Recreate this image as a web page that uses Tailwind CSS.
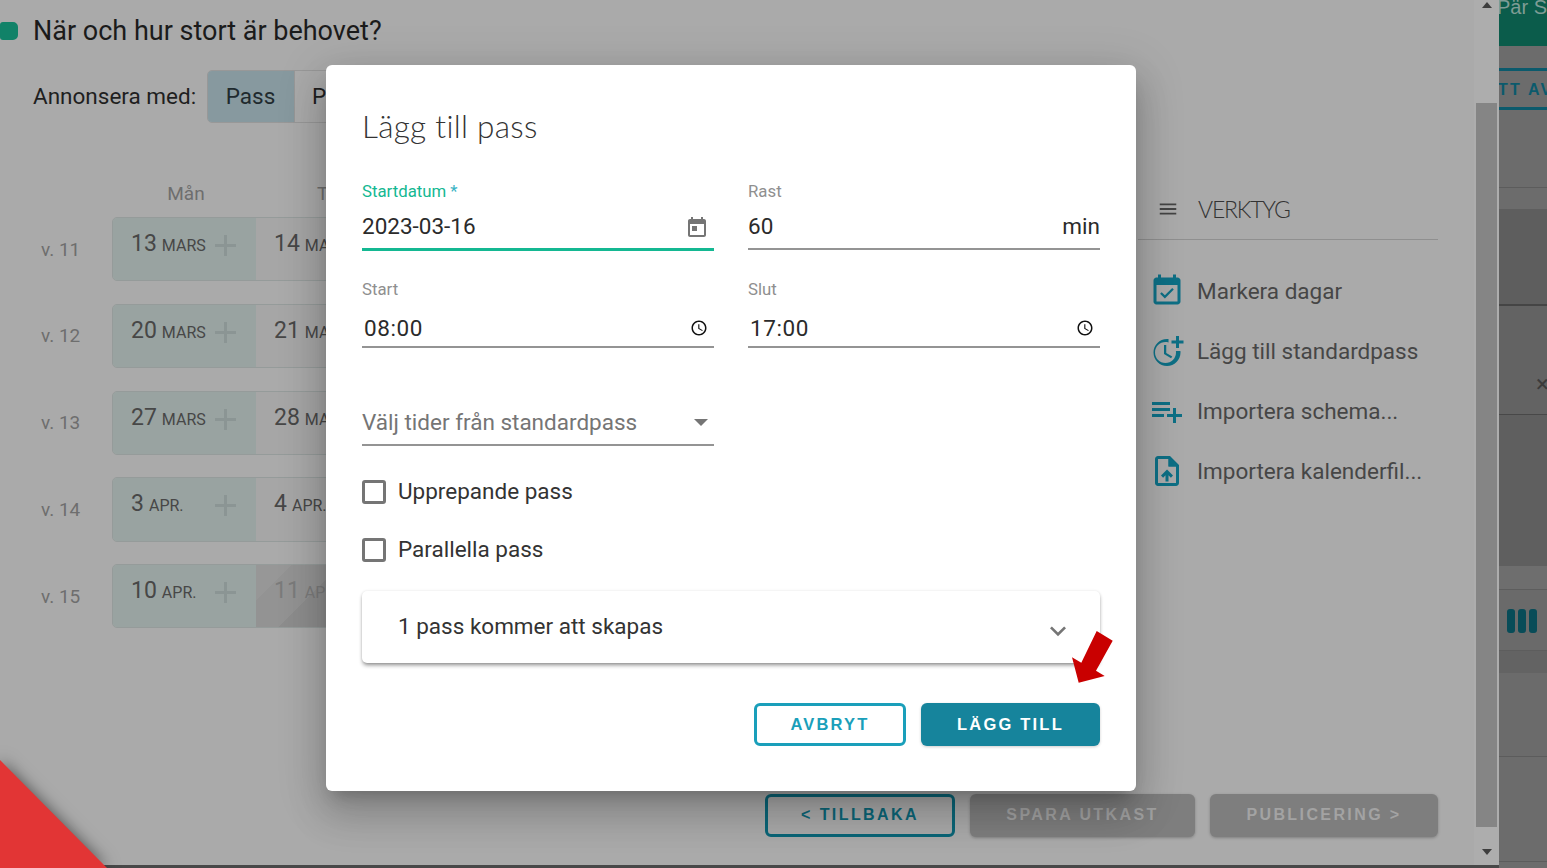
<!DOCTYPE html>
<html lang="sv">
<head>
<meta charset="utf-8">
<title>Lägg till pass</title>
<script src="https://cdn.jsdelivr.net/npm/@tailwindcss/browser@4"></script>
</head>
<body class="m-0 overflow-hidden">
<div class="relative flex w-[1547px] h-[868px] overflow-hidden font-['Roboto',sans-serif] bg-[#aaaaaa]">
  <!-- left group -->
  <div class="w-[1499px] flex flex-col">
    <div class="flex h-[865px]">
      <!-- main -->
      <div class="w-[1474px] flex flex-col">
        <div class="flex h-[794px]">
          <!-- form side -->
          <div class="w-[1138px] pt-[11px]">
            <div class="flex items-center h-[40px]">
              <span class="w-[18px] h-[18px] rounded-r-[5px] rounded-l-[3px] bg-[#118268]"></span>
              <span class="ml-[15px] text-[27px] text-[#1b1b1b] whitespace-nowrap">När och hur stort är behovet?</span>
            </div>
            <div class="flex items-center mt-[19px] h-[53px] pl-[33px]">
              <span class="text-[22.5px] text-[#1f1f1f] w-[174px] whitespace-nowrap">Annonsera med:</span>
              <div class="flex h-[53px] border border-[#989898] rounded-[5px] overflow-hidden">
                <span class="w-[86px] pr-[1px] flex items-center justify-center bg-[#87999f] text-[22.5px] text-[#1f2a2e]">Pass</span>
                <span class="w-[120px] flex items-center pl-[17px] border-l border-[#989898] text-[22.5px] text-[#1f1f1f]">P</span>
              </div>
            </div>
            <div class="flex mt-[60px] h-[20px] items-center pl-[112px] pt-[2px]">
              <span class="w-[148px] text-center text-[19px] text-[#6e6e6e]">Mån</span>
              <span class="w-[144px] pl-[57px] text-[19px] text-[#6e6e6e]">T</span>
            </div>
            <div class="flex flex-col mt-[14px] gap-[23px]">
              <div class="flex items-center">
                <span class="w-[112px] pl-[41px] pt-[3px] text-[19px] text-[#6e6e6e]">v. 11</span>
                <div class="flex h-[64px] w-[400px] border border-[#959b9a] rounded-[5px] overflow-hidden">
                  <div class="w-[143px] flex items-start pl-[18px] pt-[11px] bg-[#99a3a1] text-[#474747]">
                    <span class="text-[23px] leading-[30px]">13</span><span class="ml-[5px] mt-[6px] text-[16px] leading-[22px]">MARS</span>
                    <svg class="ml-auto mr-[20px] mt-[6px]" width="21" height="21" viewBox="0 0 21 21"><path d="M9 0h3v9h9v3h-9v9H9v-9H0V9h9z" fill="#8b9594"/></svg>
                  </div>
                  <div class="flex-1 flex items-start pl-[18px] pt-[11px] bg-[#a6a6a6] text-[#474747]">
                    <span class="text-[23px] leading-[30px]">14</span><span class="ml-[5px] mt-[6px] text-[16px] leading-[22px]">MARS</span>
                  </div>
                </div>
              </div>
              <div class="flex items-center">
                <span class="w-[112px] pl-[41px] text-[19px] text-[#6e6e6e]">v. 12</span>
                <div class="flex h-[64px] w-[400px] border border-[#959b9a] rounded-[5px] overflow-hidden">
                  <div class="w-[143px] flex items-start pl-[18px] pt-[11px] bg-[#99a3a1] text-[#474747]">
                    <span class="text-[23px] leading-[30px]">20</span><span class="ml-[5px] mt-[6px] text-[16px] leading-[22px]">MARS</span>
                    <svg class="ml-auto mr-[20px] mt-[6px]" width="21" height="21" viewBox="0 0 21 21"><path d="M9 0h3v9h9v3h-9v9H9v-9H0V9h9z" fill="#8b9594"/></svg>
                  </div>
                  <div class="flex-1 flex items-start pl-[18px] pt-[11px] bg-[#a6a6a6] text-[#474747]">
                    <span class="text-[23px] leading-[30px]">21</span><span class="ml-[5px] mt-[6px] text-[16px] leading-[22px]">MARS</span>
                  </div>
                </div>
              </div>
              <div class="flex items-center">
                <span class="w-[112px] pl-[41px] text-[19px] text-[#6e6e6e]">v. 13</span>
                <div class="flex h-[64px] w-[400px] border border-[#959b9a] rounded-[5px] overflow-hidden">
                  <div class="w-[143px] flex items-start pl-[18px] pt-[11px] bg-[#99a3a1] text-[#474747]">
                    <span class="text-[23px] leading-[30px]">27</span><span class="ml-[5px] mt-[6px] text-[16px] leading-[22px]">MARS</span>
                    <svg class="ml-auto mr-[20px] mt-[6px]" width="21" height="21" viewBox="0 0 21 21"><path d="M9 0h3v9h9v3h-9v9H9v-9H0V9h9z" fill="#8b9594"/></svg>
                  </div>
                  <div class="flex-1 flex items-start pl-[18px] pt-[11px] bg-[#a6a6a6] text-[#474747]">
                    <span class="text-[23px] leading-[30px]">28</span><span class="ml-[5px] mt-[6px] text-[16px] leading-[22px]">MARS</span>
                  </div>
                </div>
              </div>
              <div class="flex items-center -mt-[1px]">
                <span class="w-[112px] pl-[41px] pt-[1px] text-[19px] text-[#6e6e6e]">v. 14</span>
                <div class="flex h-[65px] w-[400px] border border-[#959b9a] rounded-[5px] overflow-hidden">
                  <div class="w-[143px] flex items-start pl-[18px] pt-[11px] bg-[#99a3a1] text-[#474747]">
                    <span class="text-[23px] leading-[30px]">3</span><span class="ml-[5px] mt-[6px] text-[16px] leading-[22px]">APR.</span>
                    <svg class="ml-auto mr-[20px] mt-[6px]" width="21" height="21" viewBox="0 0 21 21"><path d="M9 0h3v9h9v3h-9v9H9v-9H0V9h9z" fill="#8b9594"/></svg>
                  </div>
                  <div class="flex-1 flex items-start pl-[18px] pt-[11px] bg-[#a6a6a6] text-[#474747]">
                    <span class="text-[23px] leading-[30px]">4</span><span class="ml-[5px] mt-[6px] text-[16px] leading-[22px]">APR.</span>
                  </div>
                </div>
              </div>
              <div class="flex items-center -mt-[1px]">
                <span class="w-[112px] pl-[41px] pt-[3px] text-[19px] text-[#6e6e6e]">v. 15</span>
                <div class="flex h-[64px] w-[400px] border border-[#959b9a] rounded-[5px] overflow-hidden">
                  <div class="w-[143px] flex items-start pl-[18px] pt-[11px] bg-[#99a3a1] text-[#474747]">
                    <span class="text-[23px] leading-[30px]">10</span><span class="ml-[5px] mt-[6px] text-[16px] leading-[22px]">APR.</span>
                    <svg class="ml-auto mr-[20px] mt-[6px]" width="21" height="21" viewBox="0 0 21 21"><path d="M9 0h3v9h9v3h-9v9H9v-9H0V9h9z" fill="#8b9594"/></svg>
                  </div>
                  <div class="flex-1 flex items-start pl-[18px] pt-[11px] text-[#7b7b7b] bg-[linear-gradient(135deg,#979797_0,#979797_25px,#939393_25px,#939393_60px,#8d8d8d_60px)]">
                    <span class="text-[23px] leading-[30px]">11</span><span class="ml-[5px] mt-[6px] text-[16px] leading-[22px]">APR.</span>
                  </div>
                </div>
              </div>
            </div>
          </div>
          <!-- tools -->
          <div class="w-[300px] pt-[179px]">
            <div class="flex items-center h-[61px] border-b border-[#8f8f8f]">
              <svg class="ml-[19px]" width="22" height="22" viewBox="0 0 24 24"><path d="M3 18h18v-2H3v2zm0-5h18v-2H3v2zm0-7v2h18V6H3z" fill="#444444"/></svg>
              <span class="ml-[19px] font-['Lato'] font-light text-[23px] text-[#333333] tracking-[-1.2px]">VERKTYG</span>
            </div>
            <div class="flex flex-col mt-[21px] text-[22.5px] text-[#464646]">
              <div class="flex items-center h-[60px] pl-[11px] gap-[12px] whitespace-nowrap">
                <svg width="36" height="36" viewBox="0 0 24 24" fill="#0e6f85"><path d="M16.53 11.06L15.47 10l-4.88 4.88-2.12-2.12-1.06 1.06L10.59 17l5.94-5.94zM19 3h-1V1h-2v2H8V1H6v2H5c-1.11 0-1.99.9-1.99 2L3 19c0 1.1.89 2 2 2h14c1.1 0 2-.9 2-2V5c0-1.1-.9-2-2-2zm0 16H5V8h14v11z"/></svg>
                <span class="pt-[1px]">Markera dagar</span>
              </div>
              <div class="flex items-center h-[60px] pl-[11px] gap-[12px] whitespace-nowrap">
                <svg width="36" height="36" viewBox="0 0 24 24" fill="#0e6f85"><path d="M10 8v6l4.7 2.9.8-1.2-4-2.4V8z"/><path d="M17.92 12c.05.33.08.66.08 1 0 3.9-3.1 7-7 7s-7-3.1-7-7 3.1-7 7-7c.7 0 1.37.1 2 .29V4.23C13.36 4.08 12.69 4 12 4c-5 0-9 4-9 9s4 9 9 9 9-4 9-9c0-.34-.02-.67-.06-1h-2.02z"/><path d="M20 5V2h-2v3h-3v2h3v3h2V7h3V5z"/></svg>
                <span class="pt-[1px]">Lägg till standardpass</span>
              </div>
              <div class="flex items-center h-[60px] pl-[11px] gap-[12px] whitespace-nowrap">
                <svg width="36" height="36" viewBox="0 0 24 24" fill="#0e6f85"><path d="M14 10H2v2h12v-2zm0-4H2v2h12V6zm4 8v-4h-2v4h-4v2h4v4h2v-4h4v-2h-4zM2 16h8v-2H2v2z"/></svg>
                <span class="pt-[1px]">Importera schema...</span>
              </div>
              <div class="flex items-center h-[60px] pl-[11px] gap-[12px] whitespace-nowrap">
                <svg width="36" height="36" viewBox="0 0 24 24" fill="#0e6f85"><path d="M14 2H6c-1.1 0-1.99.9-1.99 2L4 20c0 1.1.89 2 2 2h12c1.1 0 2-.9 2-2V8l-6-6zm4 18H6V4h7v5h5v11zM8 15.01l1.41 1.41L11 14.84V19h2v-4.16l1.59 1.59L16 15.01 12.01 11z"/><path d="M13 3h1l6 6h-7z"/></svg>
                <span class="pt-[1px]">Importera kalenderfil...</span>
              </div>
            </div>
          </div>
        </div>
        <!-- footer buttons -->
        <div class="flex justify-end gap-[15px] pr-[36px] font-['Liberation_Sans'] font-bold text-[16px] tracking-[2.4px]">
          <span class="w-[190px] h-[43px] pb-[2px] flex items-center justify-center border-[3px] border-[#0b6678] rounded-[6px] text-[#0b6678]">&lt; TILLBAKA</span>
          <span class="w-[225px] h-[43px] pb-[2px] flex items-center justify-center rounded-[6px] bg-[#7e7e7e] text-[#a3a3a3] shadow-[0_1px_3px_rgba(0,0,0,0.25)]">SPARA UTKAST</span>
          <span class="w-[228px] h-[43px] pb-[2px] flex items-center justify-center rounded-[6px] bg-[#7e7e7e] text-[#a3a3a3] shadow-[0_1px_3px_rgba(0,0,0,0.25)]">PUBLICERING &gt;</span>
        </div>
      </div>
      <!-- scrollbar -->
      <div class="w-[25px] flex flex-col items-center bg-[#adadad]">
        <div class="h-[10px] flex items-center"><span class="w-0 h-0 border-x-[5.5px] border-x-transparent border-b-[6px] border-b-[#3d3d3d]"></span></div>
        <div class="mt-[93px] h-[724px] w-[21px] bg-[#858585]"></div>
        <div class="mt-[20px] h-[10px] flex items-center"><span class="w-0 h-0 border-x-[5.5px] border-x-transparent border-t-[6px] border-t-[#3d3d3d]"></span></div>
      </div>
    </div>
    <div class="h-[3px] bg-[#484848]"></div>
  </div>
  <!-- right strip -->
  <div class="w-[48px] flex flex-col bg-[#6c6c6c] overflow-hidden whitespace-nowrap">
    <div class="h-[46px] bg-[#0b5c4b] overflow-hidden font-['Liberation_Sans'] text-[20px] leading-[20px] text-[#7f9c95]"><div class="-mt-[3px] -ml-[2px]">Pär St</div></div>
    <div class="h-[22px]"></div>
    <div class="h-[42px] pt-[2px] -ml-[1px] flex items-center border-y-[3px] border-[#0b5a6c] font-['Liberation_Sans'] font-bold text-[16px] tracking-[2.2px] text-[#0b5a6c]">TT AV</div>
    <div class="h-[78px] border-b border-[#5c5c5c]"></div>
    <div class="h-[21px] bg-[#6c6c6c]"></div>
    <div class="h-[97px] bg-[#5e5e5e] border-b-2 border-[#454545]"></div>
    <div class="h-[109px] bg-[#636363] border-b border-[#484848] pl-[37px] pt-[66px]">
      <span class="block text-[24px] leading-[24px] text-[#3b3b3b]">×</span>
    </div>
    <div class="h-[151px] bg-[#5f5f5f]"></div>
    <div class="h-[24px] bg-[#6e6e6e] border-b border-[#5d5d5d]"></div>
    <div class="h-[61px] bg-[#6a6a6a] border-b border-[#5d5d5d] flex items-center gap-[3px] pl-[8px] pt-[1px]">
      <span class="w-[8px] h-[24px] rounded-[3px] bg-[#084c58]"></span>
      <span class="w-[8px] h-[24px] rounded-[3px] bg-[#084c58]"></span>
      <span class="w-[8px] h-[24px] rounded-[3px] bg-[#084c58]"></span>
    </div>
    <div class="h-[22px] bg-[#636363]"></div>
    <div class="h-[84px] bg-[#6b6b6b] border-b border-[#5c5c5c]"></div>
    <div class="h-[105px] bg-[#6c6c6c] border-b border-[#5c5c5c]"></div>
    <div class="flex-1 bg-[#6c6c6c]"></div>
  </div>

  <!-- red corner -->
  <svg class="absolute left-0 bottom-0 drop-shadow-[0_0_8px_rgba(0,0,0,0.55)]" width="125" height="125" viewBox="0 0 125 125"><polygon points="0,17 0,125 107,125" fill="#e23535"/></svg>

  <!-- dialog -->
  <div class="absolute left-[326px] top-[65px] w-[810px] h-[726px] bg-white rounded-[6px] px-[36px] pt-[44px] shadow-[0_11px_15px_-7px_rgba(0,0,0,0.2),0_24px_38px_3px_rgba(0,0,0,0.14),0_9px_46px_8px_rgba(0,0,0,0.12)]">
    <h2 class="h-[36px] flex items-center font-['Lato'] font-light text-[31.5px] tracking-[0.3px] text-[#333333]">Lägg till pass</h2>
    <div class="grid grid-cols-[352px_352px] gap-x-[34px] gap-y-[28px] mt-[36px] items-start">
      <div>
        <div class="h-[20px] pt-[2px] flex items-center text-[16.8px] text-[#14b892]">Startdatum<span class="ml-[4px] text-[#39b3c4]">*</span></div>
        <div class="h-[50px] pt-[5px] flex items-center justify-between border-b-[3px] border-[#14b892] text-[22.5px] text-[#2b2b2b]">
          <span>2023-03-16</span>
          <svg class="mr-[5px] mt-[2px]" width="24" height="24" viewBox="0 0 24 24" fill="#757575"><path d="M19 3h-1V1h-2v2H8V1H6v2H5c-1.11 0-2 .9-2 2v14c0 1.1.89 2 2 2h14c1.1 0 2-.9 2-2V5c0-1.1-.9-2-2-2zm0 16H5V8h14v11zM7 10h5v5H7z"/></svg>
        </div>
      </div>
      <div>
        <div class="h-[20px] pt-[2px] flex items-center text-[16.8px] text-[#8f8f8f]">Rast</div>
        <div class="h-[49px] pt-[5px] flex items-center justify-between border-b-2 border-[#949494] text-[22.5px] text-[#2b2b2b]">
          <span>60</span><span>min</span>
        </div>
      </div>
      <div>
        <div class="h-[20px] pt-[2px] flex items-center text-[16.8px] text-[#8f8f8f]">Start</div>
        <div class="h-[49px] pt-[13px] flex items-center justify-between border-b-2 border-[#949494] text-[22.5px] text-[#2b2b2b]">
          <span class="pl-[2px] tracking-[0.6px]">08:00</span>
          <svg class="mr-[6px] -mt-[2px]" width="18" height="18" viewBox="0 0 24 24" fill="#111111"><path d="M11.99 2C6.47 2 2 6.48 2 12s4.47 10 9.99 10C17.52 22 22 17.52 22 12S17.52 2 11.99 2zM12 20c-4.42 0-8-3.58-8-8s3.58-8 8-8 8 3.58 8 8-3.58 8-8 8zm.5-13H11v6l5.25 3.15.75-1.23-4.5-2.67z"/></svg>
        </div>
      </div>
      <div>
        <div class="h-[20px] pt-[2px] flex items-center text-[16.8px] text-[#8f8f8f]">Slut</div>
        <div class="h-[49px] pt-[13px] flex items-center justify-between border-b-2 border-[#949494] text-[22.5px] text-[#2b2b2b]">
          <span class="pl-[2px] tracking-[0.6px]">17:00</span>
          <svg class="mr-[6px] -mt-[2px]" width="18" height="18" viewBox="0 0 24 24" fill="#111111"><path d="M11.99 2C6.47 2 2 6.48 2 12s4.47 10 9.99 10C17.52 22 22 17.52 22 12S17.52 2 11.99 2zM12 20c-4.42 0-8-3.58-8-8s3.58-8 8-8 8 3.58 8 8-3.58 8-8 8zm.5-13H11v6l5.25 3.15.75-1.23-4.5-2.67z"/></svg>
        </div>
      </div>
    </div>
    <div class="mt-[54px] w-[352px] h-[44px] flex items-center justify-between border-b-2 border-[#949494] text-[22.5px] text-[#757575]">
      <span>Välj tider från standardpass</span>
      <span class="mr-[6px] -mt-[2px] w-0 h-0 border-x-[7.5px] border-x-transparent border-t-[7px] border-t-[#757575]"></span>
    </div>
    <div class="mt-[34px] h-[24px] flex items-center gap-[12px] text-[22.5px] text-[#333333]">
      <span class="w-[24px] h-[24px] border-[3px] border-[#757575] rounded-[3px]"></span>Upprepande pass
    </div>
    <div class="mt-[34px] h-[24px] flex items-center gap-[12px] text-[22.5px] text-[#333333]">
      <span class="w-[24px] h-[24px] border-[3px] border-[#757575] rounded-[3px]"></span>Parallella pass
    </div>
    <div class="mt-[29px] h-[72px] flex items-center justify-between pl-[36px] pr-[26px] rounded-[5px] bg-white shadow-[0_3px_4px_-1px_rgba(0,0,0,0.45),0_0_3px_rgba(0,0,0,0.1)] text-[22.5px] text-[#333333]">
      <span>1 pass kommer att skapas</span>
      <svg class="mt-[7px]" width="32" height="32" viewBox="0 0 24 24" fill="#757575"><path d="M16.59 8.59L12 13.17 7.41 8.59 6 10l6 6 6-6z"/></svg>
    </div>
    <div class="mt-[40px] flex justify-end gap-[15px] font-['Liberation_Sans'] font-bold text-[16.5px] tracking-[2.2px]">
      <span class="w-[152px] h-[43px] flex items-center justify-center border-[3px] border-[#1a9fba] rounded-[6px] text-[#1a9fba]">AVBRYT</span>
      <span class="w-[179px] h-[43px] flex items-center justify-center rounded-[6px] bg-[#16849c] text-white shadow-[0_1px_3px_rgba(0,0,0,0.2)]">LÄGG TILL</span>
    </div>
  </div>

  <!-- red arrow annotation -->
  <svg class="absolute left-[1072px] top-[631px]" width="41" height="52" viewBox="0 0 41 52"><polygon points="24.7,0 40.7,9.7 24,39.7 32.7,45 6.7,51.7 0,26.3 9.3,31.7" fill="#c90000"/></svg>
</div>
</body>
</html>
